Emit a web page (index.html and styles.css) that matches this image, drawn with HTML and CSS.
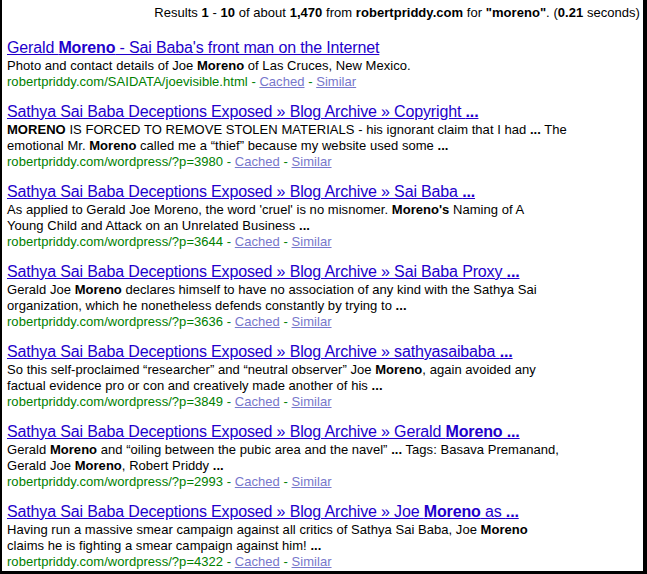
FILE: index.html
```html
<!DOCTYPE html>
<html>
<head>
<meta charset="utf-8">
<link rel="stylesheet" href="styles.css">
</head>
<body>
<div class="frame">
  <div class="stats">Results <b>1</b> - <b>10</b> of about <b>1,470</b> from <b>robertpriddy.com</b> for <b>"moreno"</b>. (<b>0.21</b> seconds)</div>
  <div class="results">
    <div class="result">
      <a class="title" href="#">Gerald <b>Moreno</b> - Sai Baba's front man on the Internet</a>
      <div class="snippet">Photo and contact details of Joe <b>Moreno</b> of Las Cruces, New Mexico.</div>
      <div class="meta"><span class="url">robertpriddy.com/SAIDATA/joevisible.html - </span><a class="fl" href="#">Cached</a><span class="url"> - </span><a class="fl" href="#">Similar</a></div>
    </div>
    <div class="result">
      <a class="title" href="#">Sathya Sai Baba Deceptions Exposed » Blog Archive » Copyright <b>...</b></a>
      <div class="snippet"><b>MORENO</b> IS FORCED TO REMOVE STOLEN MATERIALS - his ignorant claim that I had <b>...</b> The<br>emotional Mr. <b>Moreno</b> called me a “thief” because my website used some <b>...</b></div>
      <div class="meta"><span class="url">robertpriddy.com/wordpress/?p=3980 - </span><a class="fl" href="#">Cached</a><span class="url"> - </span><a class="fl" href="#">Similar</a></div>
    </div>
    <div class="result">
      <a class="title" href="#">Sathya Sai Baba Deceptions Exposed » Blog Archive » Sai Baba <b>...</b></a>
      <div class="snippet">As applied to Gerald Joe Moreno, the word 'cruel' is no misnomer. <b>Moreno's</b> Naming of A<br>Young Child and Attack on an Unrelated Business <b>...</b></div>
      <div class="meta"><span class="url">robertpriddy.com/wordpress/?p=3644 - </span><a class="fl" href="#">Cached</a><span class="url"> - </span><a class="fl" href="#">Similar</a></div>
    </div>
    <div class="result">
      <a class="title" href="#">Sathya Sai Baba Deceptions Exposed » Blog Archive » Sai Baba Proxy <b>...</b></a>
      <div class="snippet">Gerald Joe <b>Moreno</b> declares himself to have no association of any kind with the Sathya Sai<br>organization, which he nonetheless defends constantly by trying to <b>...</b></div>
      <div class="meta"><span class="url">robertpriddy.com/wordpress/?p=3636 - </span><a class="fl" href="#">Cached</a><span class="url"> - </span><a class="fl" href="#">Similar</a></div>
    </div>
    <div class="result">
      <a class="title" href="#">Sathya Sai Baba Deceptions Exposed » Blog Archive » sathyasaibaba <b>...</b></a>
      <div class="snippet">So this self-proclaimed “researcher” and “neutral observer” Joe <b>Moreno</b>, again avoided any<br>factual evidence pro or con and creatively made another of his <b>...</b></div>
      <div class="meta"><span class="url">robertpriddy.com/wordpress/?p=3849 - </span><a class="fl" href="#">Cached</a><span class="url"> - </span><a class="fl" href="#">Similar</a></div>
    </div>
    <div class="result">
      <a class="title" href="#">Sathya Sai Baba Deceptions Exposed » Blog Archive » Gerald <b>Moreno ...</b></a>
      <div class="snippet">Gerald <b>Moreno</b> and “oiling between the pubic area and the navel” <b>...</b> Tags: Basava Premanand,<br>Gerald Joe <b>Moreno</b>, Robert Priddy <b>...</b></div>
      <div class="meta"><span class="url">robertpriddy.com/wordpress/?p=2993 - </span><a class="fl" href="#">Cached</a><span class="url"> - </span><a class="fl" href="#">Similar</a></div>
    </div>
    <div class="result">
      <a class="title" href="#">Sathya Sai Baba Deceptions Exposed » Blog Archive » Joe <b>Moreno</b> as <b>...</b></a>
      <div class="snippet">Having run a massive smear campaign against all critics of Sathya Sai Baba, Joe <b>Moreno</b><br>claims he is fighting a smear campaign against him! <b>...</b></div>
      <div class="meta"><span class="url">robertpriddy.com/wordpress/?p=4322 - </span><a class="fl" href="#">Cached</a><span class="url"> - </span><a class="fl" href="#">Similar</a></div>
    </div>
  </div>
</div>
</body>
</html>
```

FILE: styles.css
```css
html, body {
  margin: 0;
  padding: 0;
  background: #ffffff;
}
body {
  font-family: "Liberation Sans", Arial, sans-serif;
  color: #000000;
}
.frame {
  box-sizing: border-box;
  width: 647px;
  height: 574px;
  border-left: 2px solid #000;
  border-right: 4px solid #000;
  border-bottom: 3px solid #000;
  padding: 5px 3px 0 5px;
  background: #fff;
  overflow: hidden;
}
.stats {
  font-size: 13px;
  line-height: 16px;
  text-align: right;
  white-space: nowrap;
  letter-spacing: 0.04px;
}
.results {
  margin-top: 16px;
  display: flex;
  flex-direction: column;
  gap: 11px;
}
.result {
  display: flex;
  flex-direction: column;
  align-items: flex-start;
}
.title {
  font-size: 16px;
  line-height: 21px;
  color: #2200cc;
  text-decoration: underline;
  white-space: nowrap;
  letter-spacing: -0.15px;
}
.snippet, .meta {
  font-size: 13px;
  line-height: 16px;
  white-space: nowrap;
  letter-spacing: 0.04px;
}
.url {
  color: #008000;
}
.fl {
  color: #7777cc;
  text-decoration: underline;
}
```
